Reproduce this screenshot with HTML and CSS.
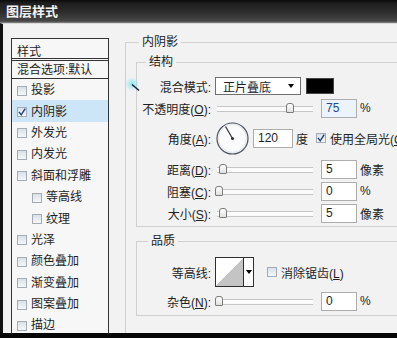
FILE: index.html
```html
<!DOCTYPE html>
<html lang="zh-CN">
  <head>
    <meta charset="UTF-8" />
    <title>图层样式</title>
    <link rel="stylesheet" href="styles.css">
  </head>
  <body>
    <div class="window">
      <div class="titlebar">图层样式</div>
      <div class="main">
        <!-- liste des styles -->
        <div class="styles-list">
          <div class="list-head">样式</div>
          <div class="list-blend">混合选项:默认</div>
          <ul class="list-items">
            <li><span class="cb"></span>投影</li>
            <li class="selected"><span class="cb"><svg width="8" height="8" viewBox="0 0 8 8"><path d="M1 3.8 L3.2 6.8 L7.2 0.6" fill="none" stroke="#1f3f7c" stroke-width="1.4"/></svg></span>内阴影</li>
            <li><span class="cb"></span>外发光</li>
            <li><span class="cb"></span>内发光</li>
            <li><span class="cb"></span>斜面和浮雕</li>
            <li class="sub"><span class="cb"></span>等高线</li>
            <li class="sub"><span class="cb"></span>纹理</li>
            <li><span class="cb"></span>光泽</li>
            <li><span class="cb"></span>颜色叠加</li>
            <li><span class="cb"></span>渐变叠加</li>
            <li><span class="cb"></span>图案叠加</li>
            <li><span class="cb"></span>描边</li>
          </ul>
        </div>

        <!-- reglages -->
        <div class="settings">
          <fieldset class="group effect">
            <legend>内阴影</legend>
            <fieldset class="group structure">
              <legend>结构</legend>
              <div class="row row-blend">
                <span class="lbl">混合模式:</span>
                <div class="select"><span>正片叠底</span><span class="arrow"></span></div>
                <div class="swatch"></div>
              </div>
              <div class="row row-opacity">
                <span class="lbl">不透明度(<u>O</u>):</span>
                <div class="slider"><span class="thumb" style="left: 71px"></span></div>
                <div class="num focus">75</div>
                <span class="unit">%</span>
              </div>
              <div class="row row-angle">
                <span class="lbl">角度(<u>A</u>):</span>
                <svg class="dial" width="33" height="33" viewBox="0 0 33 33">
                  <circle cx="16.5" cy="16.5" r="15.5" fill="#fbfbfb" stroke="#4b5261" stroke-width="1.2"/>
                  <circle cx="16.5" cy="16.5" r="14" fill="none" stroke="#dfe3e8" stroke-width="1"/>
                  <line x1="16.5" y1="16.5" x2="9.5" y2="4.5" stroke="#2b2f38" stroke-width="1.2"/>
                  <circle cx="16.5" cy="16.5" r="1.5" fill="#2b2f38"/>
                </svg>
                <div class="num wide">120</div>
                <span class="unit">度</span>
                <span class="cb cb-global"><svg width="8" height="8" viewBox="0 0 8 8"><path d="M1 3.8 L3.2 6.8 L7.2 0.6" fill="none" stroke="#1f3f7c" stroke-width="1.4"/></svg></span>
                <span class="cb-text">使用全局光(<u>G</u>)</span>
              </div>
              <div class="row row-distance">
                <span class="lbl">距离(<u>D</u>):</span>
                <div class="slider"><span class="thumb" style="left: 4px"></span></div>
                <div class="num">5</div>
                <span class="unit">像素</span>
              </div>
              <div class="row row-small">
                <span class="lbl">阻塞(<u>C</u>):</span>
                <div class="slider"><span class="thumb" style="left: 0px"></span></div>
                <div class="num">0</div>
                <span class="unit">%</span>
              </div>
              <div class="row row-small">
                <span class="lbl">大小(<u>S</u>):</span>
                <div class="slider"><span class="thumb" style="left: 4px"></span></div>
                <div class="num">5</div>
                <span class="unit">像素</span>
              </div>
            </fieldset>

            <fieldset class="group quality">
              <legend>品质</legend>
              <div class="row row-contour">
                <span class="lbl">等高线:</span>
                <div class="contour"><span class="preview"></span><span class="drop"><span class="arrow"></span></span></div>
                <span class="cb cb-aa"></span>
                <span class="cb-text">消除锯齿(<u>L</u>)</span>
              </div>
              <div class="row row-noise">
                <span class="lbl">杂色(<u>N</u>):</span>
                <div class="slider"><span class="thumb" style="left: 0px"></span></div>
                <div class="num">0</div>
                <span class="unit">%</span>
              </div>
            </fieldset>
          </fieldset>

          <svg class="cursor-mark" width="18" height="18" viewBox="0 0 18 18">
            <defs>
              <radialGradient id="glow">
                <stop offset="0" stop-color="#7fe9f2" stop-opacity="0.9"/>
                <stop offset="1" stop-color="#7fe9f2" stop-opacity="0"/>
              </radialGradient>
            </defs>
            <circle cx="7" cy="6" r="7" fill="url(#glow)"/>
            <line x1="7" y1="6.5" x2="14" y2="12.5" stroke="#1d2230" stroke-width="1.6"/>
          </svg>
        </div>
      </div>
    </div>
  </body>
</html>
```

FILE: styles.css
```css
* {
  box-sizing: border-box;
}
body {
  margin: 0;
  background-color: #000;
  font-family: "Liberation Sans", "Noto Sans CJK SC", sans-serif;
  font-size: 12px;
  color: #1e1e1e;
}
.window {
  width: 397px;
  height: 338px;
  display: flex;
  flex-direction: column;
  overflow: hidden;
  border-bottom: 5px solid #060606;
}
.titlebar {
  flex: none;
  height: 23px;
  line-height: 23px;
  padding-left: 6px;
  color: #f2f2f2;
  font-weight: bold;
  font-size: 13px;
  background: linear-gradient(#0a0a0a 0, #1f1f1f 15%, #2e2e2e 55%, #474747 92%, #8a8a8a 100%);
}
.main {
  flex: 1;
  min-height: 0;
  display: flex;
  background-color: #f2f2f2;
  border-top: 1px solid #dadada;
  border-left: 3px solid #111;
  overflow: hidden;
}

/* liste a gauche */
.styles-list {
  flex: none;
  width: 98px;
  margin: 14px 0 0 8px;
  border: 1px solid #333;
  border-bottom: none;
  background-color: #f7f7f7;
}
.list-head {
  height: 22px;
  padding: 4px 0 0 5px;
  line-height: 18px;
  border-bottom: 3px double #333;
}
.list-blend {
  height: 18px;
  padding: 2px 0 0 5px;
  line-height: 15px;
  border-bottom: 1px solid #333;
}
.list-items {
  list-style: none;
  margin: 0;
  padding: 0;
}
.list-items li {
  height: 21.4px;
  display: flex;
  align-items: center;
  padding: 2px 0 0 5px;
  line-height: 15px;
  white-space: nowrap;
}
.list-items li.sub {
  padding-left: 20px;
}
.list-items li.selected {
  background-color: #cde6f7;
}
.cb {
  flex: none;
  width: 10px;
  height: 10px;
  margin-right: 4px;
  border: 1px solid #a3acb6;
  background: linear-gradient(#d9e0e7, #f6f8fa);
}
.cb svg {
  display: block;
}

/* panneau de droite */
.settings {
  position: relative;
  flex: none;
  width: 290px;
  margin-left: 16px;
  padding-top: 11px;
}
.group {
  margin: 0;
  min-width: 0;
  border: 1px solid #d0d0d0;
}
.group legend {
  padding: 0 3px;
  margin-left: 3px;
  line-height: 14px;
  color: #222;
}
.effect {
  padding: 0 10px 30px 10px;
}
.structure {
  margin-top: 6px;
  padding: 8px 0 3px 0;
}
.structure legend {
  margin-left: 9px;
}
.quality {
  margin-top: 7px;
  padding: 9px 0 4px 0;
}
.quality legend {
  margin-left: 11px;
}
.row {
  display: flex;
  align-items: center;
  height: 20px;
  white-space: nowrap;
}
.lbl {
  flex: none;
  width: 74px;
  margin-right: 4px;
  text-align: right;
}
.row-blend {
  height: 18px;
}
.row-opacity {
  margin-top: 3px;
}
.row-angle {
  height: 32px;
  margin-top: 4px;
}
.row-distance {
  margin-top: 5px;
}
.row-small {
  margin-top: 2px;
}
.row-contour {
  height: 30px;
}
.row-noise {
  margin-top: 4px;
}

.select {
  width: 86px;
  height: 18px;
  padding: 0 6px 0 7px;
  display: flex;
  align-items: center;
  justify-content: space-between;
  background-color: #fff;
  border: 1px solid #6f6f6f;
}
.arrow {
  width: 0;
  height: 0;
  border-left: 3.5px solid transparent;
  border-right: 3.5px solid transparent;
  border-top: 4px solid #000;
}
.swatch {
  width: 28px;
  height: 16px;
  margin-left: 5px;
  background-color: #000;
  border: 1px solid #444;
}
.slider {
  position: relative;
  flex: none;
  width: 98px;
  height: 10px;
}
.slider::before {
  content: "";
  position: absolute;
  left: 2px;
  right: 0;
  top: 3px;
  height: 4px;
  border-top: 1px solid #c6c6c6;
  border-bottom: 1px solid #c6c6c6;
  background-color: #fbfbfb;
}
.thumb {
  position: absolute;
  top: 0;
  width: 8px;
  height: 10px;
  border: 1px solid #7a7a7a;
  border-radius: 3px 3px 1px 1px;
  background: linear-gradient(#fff, #e0e0e0);
}
.num {
  flex: none;
  width: 36px;
  height: 19px;
  margin-left: 8px;
  padding-left: 4px;
  line-height: 17px;
  background-color: #fff;
  border: 1px solid #adadad;
}
.num.focus {
  background-color: #ebf4fc;
  color: #204c8c;
}
.num.wide {
  width: 40px;
  margin-left: 4px;
}
.unit {
  margin-left: 3px;
}
.dial {
  flex: none;
  margin-left: 1px;
}
.cb-global {
  margin-left: 8px;
}
.cb-aa {
  margin-left: 13px;
}
.contour {
  display: flex;
  width: 39px;
  height: 30px;
  border: 1px solid #2e2e2e;
  background-color: #fff;
}
.contour .preview {
  width: 27px;
  background: linear-gradient(to bottom right, #fff 50%, #c4c4c4 50%);
}
.contour .drop {
  flex: 1;
  display: flex;
  align-items: center;
  justify-content: center;
  border-left: 1px solid #2e2e2e;
}
.cursor-mark {
  position: absolute;
  left: 0;
  top: 54px;
}
```
